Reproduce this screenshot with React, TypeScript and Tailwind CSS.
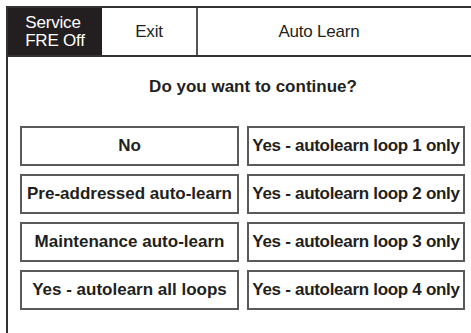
import React from "react";

const left = [
  "No",
  "Pre-addressed auto-learn",
  "Maintenance auto-learn",
  "Yes - autolearn all loops",
];
const right = [
  "Yes - autolearn loop 1 only",
  "Yes - autolearn loop 2 only",
  "Yes - autolearn loop 3 only",
  "Yes - autolearn loop 4 only",
];

export default function App() {
  return (
    <div
      className="w-[471px] h-[333px] overflow-hidden bg-white text-[#231f20]"
      style={{ fontFamily: '"Liberation Sans", Arial, sans-serif' }}
    >
      <div className="ml-[6px] mt-[6px] w-[492px] h-[340px] border-l-2 border-t-2 border-[#333333]">
        <div className="flex h-[49px] border-b-2 border-[#333333]">
          <div className="w-[94px] bg-[#231f20] text-white text-[17px] leading-[18px] flex flex-col items-center justify-center tracking-[-0.2px]">
            <span className="-ml-[4px]">Service</span>
            <span>FRE Off</span>
          </div>
          <div className="w-[96px] border-r-2 border-[#555555] flex items-center justify-center text-[17px] tracking-[-0.2px]">
            Exit
          </div>
          <div className="w-[242px] flex items-center justify-center text-[17px] tracking-[-0.2px]">
            Auto Learn
          </div>
        </div>
        <div className="mt-[20px] text-center font-bold text-[17px] leading-[20px]">
          Do you want to continue?
        </div>
        <div className="mt-[29px] ml-[12px] grid grid-cols-[219px_218px] gap-x-[8px] gap-y-[8px]">
          {left.map((t, i) => (
            <React.Fragment key={i}>
              <div className="h-[40px] border-2 border-[#5a5a5a] flex items-center justify-center font-bold text-[17px] whitespace-nowrap">
                {t}
              </div>
              <div className="h-[40px] border-2 border-[#5a5a5a] flex items-center justify-center font-bold text-[17px] whitespace-nowrap tracking-[-0.3px]">
                {right[i]}
              </div>
            </React.Fragment>
          ))}
        </div>
      </div>
    </div>
  );
}
